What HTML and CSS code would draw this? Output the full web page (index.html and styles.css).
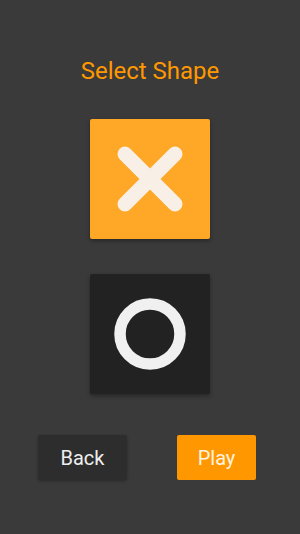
FILE: index.html
```html
<!DOCTYPE html>
<html lang="en">
<head>
    <meta charset="UTF-8">
    <meta name="viewport" content="width=device-width, initial-scale=1.0">
    <title>Select Shape</title>
    <link rel="stylesheet" href="styles.css">
</head>
<body>
    <div class="screen">
        <h1 class="title">Select Shape</h1>

        <div class="shape-card shape-x">
            <svg width="120" height="120" viewBox="0 0 120 120">
                <path d="M35 35 L85 85 M85 35 L35 85" stroke="#f8f0e6" stroke-width="15" stroke-linecap="round" fill="none"/>
            </svg>
        </div>

        <div class="shape-card shape-o">
            <svg width="120" height="120" viewBox="0 0 120 120">
                <circle cx="60" cy="60" r="30" stroke="#f0f0f0" stroke-width="11.5" fill="none"/>
            </svg>
        </div>

        <div class="actions">
            <button class="btn btn-back">Back</button>
            <button class="btn btn-play">Play</button>
        </div>
    </div>
</body>
</html>
```

FILE: styles.css
```css
html, body {
    margin: 0;
    padding: 0;
    height: 100%;
}

body {
    font-family: Roboto, "Liberation Sans", sans-serif;
    background: #3a3a3a;
}

.screen {
    display: flex;
    flex-direction: column;
    align-items: center;
    padding-top: 57px;
}

.title {
    margin: 0;
    font-size: 24px;
    font-weight: 400;
    color: #ff9800;
    line-height: 28px;
}

.shape-card {
    width: 120px;
    height: 120px;
    border-radius: 2px;
    box-shadow: 0 2px 4px rgba(0,0,0,0.35);
}

.shape-card svg {
    display: block;
}

.shape-x {
    background: #ffa726;
    margin-top: 34px;
}

.shape-o {
    background: #222222;
    margin-top: 35px;
}

.actions {
    align-self: stretch;
    display: flex;
    gap: 50px;
    padding-left: 38px;
    margin-top: 41px;
}

.btn {
    border: none;
    border-radius: 2px;
    height: 45px;
    font-family: inherit;
    font-size: 20px;
    padding: 0;
}

.btn-back {
    width: 89px;
    background: #2d2d2d;
    color: #eeeeee;
    box-shadow: 0 1px 3px rgba(0,0,0,0.3);
}

.btn-play {
    width: 79px;
    background: #ff9800;
    color: #fff3e0;
}
```
